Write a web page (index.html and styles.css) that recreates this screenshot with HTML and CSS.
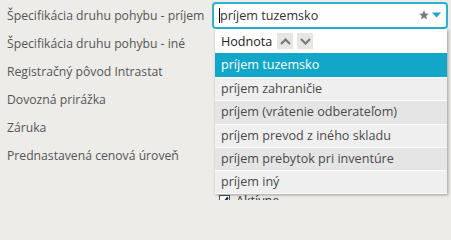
FILE: index.html
```html
<!DOCTYPE html>
<html lang="sk">
<head>
<meta charset="utf-8">
<title>Formulár</title>
<link rel="stylesheet" href="styles.css">
</head>
<body>
<div class="form">
  <div class="row">
    <label class="lbl">Špecifikácia druhu pohybu - príjem</label>
    <div class="field">
      <div class="combo">
        <span class="caret"></span><span class="value">príjem tuzemsko</span>
        <span class="icons">
          <svg class="star" width="10" height="10" viewBox="0 0 10 10"><path d="M5 0.3 L6.4 3.4 L9.8 3.7 L7.2 6 L8 9.4 L5 7.6 L2 9.4 L2.8 6 L0.2 3.7 L3.6 3.4 Z" fill="#7a7a7a"/></svg>
          <svg class="arrow" width="9" height="6" viewBox="0 0 9 6"><path d="M0 0.5 H9 L4.5 5.5 Z" fill="#1aa6cb"/></svg>
        </span>
      </div>
    </div>
  </div>
  <div class="row"><label class="lbl">Špecifikácia druhu pohybu - iné</label><div class="field"></div></div>
  <div class="row"><label class="lbl">Registračný pôvod Intrastat</label><div class="field"></div></div>
  <div class="row"><label class="lbl">Dovozná prirážka</label><div class="field"></div></div>
  <div class="row"><label class="lbl">Záruka</label><div class="field"></div></div>
  <div class="row"><label class="lbl">Prednastavená cenová úroveň</label><div class="field"></div></div>
  <div class="row check-row">
    <span class="lbl"></span>
    <div class="field check">
      <svg width="11" height="11" viewBox="0 0 11 11"><rect x="0.5" y="0.5" width="10" height="10" fill="#fff" stroke="#555"/><path d="M2 5.5 L4.5 8 L9 2.5" stroke="#1b2f57" stroke-width="2.2" fill="none"/></svg>
      <span>Aktívne</span>
    </div>
  </div>
</div>

<div class="dropdown">
  <div class="dd-head">
    <span class="dd-title">Hodnota</span>
    <span class="sort-btn"><svg width="11" height="7" viewBox="0 0 11 7"><path d="M1 6 L5.5 1.5 L10 6" stroke="#7a7a7a" stroke-width="2.2" fill="none"/></svg></span>
    <span class="sort-btn"><svg width="11" height="7" viewBox="0 0 11 7"><path d="M1 1 L5.5 5.5 L10 1" stroke="#7a7a7a" stroke-width="2.2" fill="none"/></svg></span>
  </div>
  <ul class="dd-list">
    <li class="opt selected">príjem tuzemsko</li>
    <li class="opt">príjem zahraničie</li>
    <li class="opt dark">príjem (vrátenie odberateľom)</li>
    <li class="opt">príjem prevod z iného skladu</li>
    <li class="opt dark">príjem prebytok pri inventúre</li>
    <li class="opt">príjem iný</li>
  </ul>
</div>
</body>
</html>
```
FILE: styles.css
```css
html, body {
  margin: 0;
  padding: 0;
}
body {
  background: #edece8;
  font-family: "Open Sans", "Noto Sans", sans-serif;
  font-size: 12.6px;
  color: #555;
  width: 451px;
  height: 200px;
  overflow: hidden;
  position: relative;
}
.form {
  display: flex;
  flex-direction: column;
  padding-top: 1px;
}
.row {
  display: grid;
  grid-template-columns: 212px 236px;
  height: 28px;
  align-items: center;
}
.lbl {
  padding-left: 7px;
  color: #565656;
  white-space: nowrap;
  font-size: 12.2px;
}
.combo {
  box-sizing: border-box;
  height: 27px;
  border: 2px solid #2bb1d3;
  border-radius: 4px;
  background: #fff;
  display: flex;
  align-items: center;
  padding-left: 5px;
  padding-right: 5px;
  color: #333;
}
.caret {
  width: 1px;
  height: 15px;
  background: #000;
}
.value {
  flex: 1;
  color: #333;
}
.icons {
  display: flex;
  align-items: center;
  gap: 3px;
}
.check-row {
  margin-top: 17px;
}
.check {
  display: flex;
  align-items: center;
  gap: 6px;
  padding-left: 7px;
  color: #333;
}
.dropdown {
  position: absolute;
  left: 215px;
  top: 29px;
  width: 232px;
  background: #fff;
  box-shadow: 1px 1px 3px rgba(0,0,0,0.35);
}
.dd-head {
  height: 24px;
  display: flex;
  align-items: center;
  padding-left: 6px;
  gap: 4px;
  color: #222;
}
.dd-title {
  margin-right: 1px;
}
.sort-btn {
  width: 16px;
  height: 16px;
  background: #e6e6e4;
  display: flex;
  align-items: center;
  justify-content: center;
}
.dd-list {
  list-style: none;
  margin: 0;
  padding: 0;
}
.opt {
  box-sizing: border-box;
  height: 23.3px;
  line-height: 22px;
  padding-left: 6px;
  background: #efefef;
  border-bottom: 1px solid #fbfbfb;
  color: #4a4a4a;
  white-space: nowrap;
}
.opt.dark {
  background: #e5e5e5;
}
.opt.selected {
  background: #12a6c9;
  color: #fff;
  height: 25px;
  line-height: 24px;
  border-bottom: 1px solid #fff;
}
```
